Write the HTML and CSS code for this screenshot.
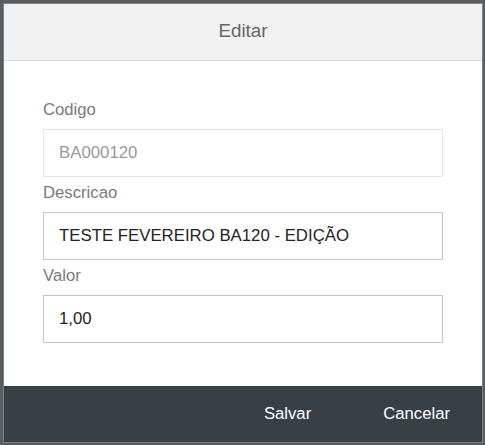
FILE: index.html
```html
<!DOCTYPE html>
<html lang="pt">
<head>
<meta charset="utf-8">
<title>Editar</title>
<link rel="stylesheet" href="styles.css">
</head>
<body>
<div class="dialog">
  <div class="dialog-header">Editar</div>
  <div class="dialog-body">
    <label class="field-label">Codigo</label>
    <div class="field-input disabled">BA000120</div>
    <label class="field-label">Descricao</label>
    <div class="field-input">TESTE FEVEREIRO BA120 - EDIÇÃO</div>
    <label class="field-label">Valor</label>
    <div class="field-input">1,00</div>
  </div>
  <div class="dialog-footer">
    <button class="btn">Salvar</button>
    <button class="btn">Cancelar</button>
  </div>
</div>
</body>
</html>
```

FILE: styles.css
```css
* { box-sizing: border-box; }
html, body { margin: 0; padding: 0; }
body {
  background: #5a5d5f;
  width: 485px;
  height: 445px;
  padding: 3px 1px 1px 3px;
  font-family: "Liberation Sans", Arial, sans-serif;
}
.dialog {
  width: 480px;
  height: 440px;
  border: 1px solid #7e8183;
  background: #fff;
  display: flex;
  flex-direction: column;
}
.dialog-header {
  height: 57px;
  background: #f1f1f1;
  border-bottom: 1px solid #dddddd;
  display: flex;
  align-items: center;
  justify-content: center;
  font-size: 18.8px;
  color: #666666;
  padding-bottom: 2px;
}
.dialog-body {
  flex: 1;
  padding: 33px 39px 0 39px;
  display: flex;
  flex-direction: column;
}
.field-label {
  display: block;
  font-size: 16.7px;
  line-height: 20px;
  color: #7a7a7a;
  padding: 6px 0 9px 0;
}
.field-input {
  height: 48px;
  border: 1px solid #c4c4c4;
  padding: 0 15px;
  display: flex;
  align-items: center;
  font-size: 16.8px;
  color: #222222;
}
.field-input.disabled {
  border-color: #e4e4e4;
  color: #999999;
}
.dialog-footer {
  height: 56px;
  background: #383f45;
  display: flex;
  justify-content: flex-end;
  align-items: center;
  padding-right: 16px;
  gap: 40px;
}
.btn {
  background: none;
  border: none;
  color: #ffffff;
  font-family: "Liberation Sans", Arial, sans-serif;
  font-size: 16.7px;
  padding: 0 16px;
  height: 100%;
  cursor: pointer;
}
```
